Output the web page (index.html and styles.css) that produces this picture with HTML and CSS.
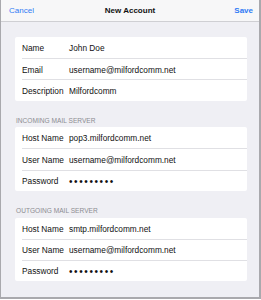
FILE: index.html
```html
<!DOCTYPE html>
<html>
<head>
<meta charset="utf-8">
<link rel="stylesheet" href="styles.css">
</head>
<body>
<div class="frame">
  <div class="navbar">
    <span class="nav-btn">Cancel</span>
    <span class="nav-title">New Account</span>
    <span class="nav-btn nav-save">Save</span>
  </div>
  <div class="content">
    <div class="card">
      <div class="row"><span class="label">Name</span><span class="value">John Doe</span></div>
      <div class="row"><span class="label">Email</span><span class="value">username@milfordcomm.net</span></div>
      <div class="row"><span class="label">Description</span><span class="value">Milfordcomm</span></div>
    </div>
    <div class="section-title">INCOMING MAIL SERVER</div>
    <div class="card">
      <div class="row"><span class="label">Host Name</span><span class="value">pop3.milfordcomm.net</span></div>
      <div class="row"><span class="label">User Name</span><span class="value">username@milfordcomm.net</span></div>
      <div class="row"><span class="label">Password</span><span class="value dots">•••••••••</span></div>
    </div>
    <div class="section-title">OUTGOING MAIL SERVER</div>
    <div class="card">
      <div class="row"><span class="label">Host Name</span><span class="value">smtp.milfordcomm.net</span></div>
      <div class="row"><span class="label">User Name</span><span class="value">username@milfordcomm.net</span></div>
      <div class="row"><span class="label">Password</span><span class="value dots">•••••••••</span></div>
    </div>
  </div>
</div>
</body>
</html>
```

FILE: styles.css
```css
html, body {
  margin: 0;
  padding: 0;
  background: #ffffff;
}
body {
  width: 261px;
  height: 300px;
  font-family: "Liberation Sans", Arial, sans-serif;
  color: #111;
}
.frame {
  box-sizing: border-box;
  width: 261px;
  height: 299px;
  background: #efeff4;
  border-left: 1px solid #a9a9ad;
  border-right: 2px solid #a9a9ad;
  border-bottom: 2px solid #a9a9ad;
  display: flex;
  flex-direction: column;
}
.navbar {
  box-sizing: border-box;
  height: 22px;
  background: #f7f7f8;
  border-bottom: 1px solid #cfcfd3;
  display: flex;
  align-items: center;
  justify-content: space-between;
  padding: 0 6px 0 8px;
  position: relative;
  font-size: 8px;
}
.nav-btn {
  color: #2f7bf5;
}
.nav-save {
  font-weight: bold;
}
.nav-title {
  font-weight: bold;
  color: #111;
  position: absolute;
  left: 0;
  right: 0;
  text-align: center;
  pointer-events: none;
}
.content {
  padding: 15px 12px 0 14px;
  display: flex;
  flex-direction: column;
}
.card {
  background: #ffffff;
  border-radius: 2px;
  padding-left: 7px;
}
.row {
  box-sizing: border-box;
  height: 21.2px;
  display: flex;
  align-items: center;
  font-size: 8.3px;
  padding-top: 1px;
}
.row + .row {
  border-top: 1px solid #e0e0e4;
}
.label {
  width: 47px;
  flex: none;
  white-space: nowrap;
}
.value {
  white-space: nowrap;
}
.dots {
  font-size: 10px;
  letter-spacing: 1.6px;
}
.section-title {
  font-size: 6.6px;
  color: #8c8c91;
  height: 26.7px;
  box-sizing: border-box;
  padding-top: 16.5px;
  padding-left: 1px;
}
```
